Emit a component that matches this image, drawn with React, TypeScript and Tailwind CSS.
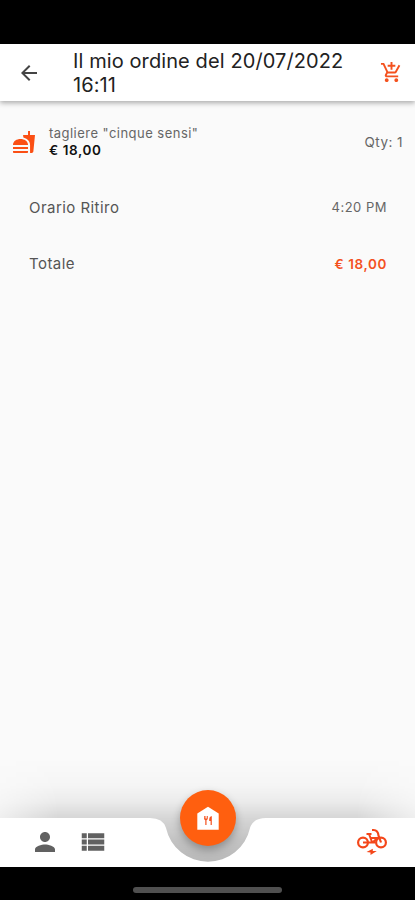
import React from 'react';
import {
  MdAddShoppingCart,
  MdArrowBack,
  MdFastfood,
  MdPerson,
  MdViewList,
} from 'react-icons/md';

const order = {
  title: 'Il mio ordine del 20/07/2022 16:11',
  items: [{ name: 'tagliere "cinque sensi"', price: '€ 18,00', qty: 1 }],
  pickup: '4:20 PM',
  total: '€ 18,00',
};

const BikeIcon = () => (
  <svg viewBox="0 0 30 30" className="size-[30px]" fill="none" stroke="#f4471a" strokeWidth="2">
    <circle cx="6" cy="15.5" r="4.9" strokeWidth="2.2" />
    <circle cx="24" cy="15.5" r="4.9" strokeWidth="2.2" />
    <path d="M9.5 7h5M12 7l3.2 8.5H6M13 11h7.5l-5 4.5h3" />
    <path d="M15 3h1.5q4.5.2 5 5.5L24 15.5" strokeWidth="2.2" />
    <path d="M9.5 25l6.3-3.2v2.2h4l-6.3 4v-2.6z" fill="#f4471a" stroke="none" />
  </svg>
);

const HouseIcon = () => (
  <svg viewBox="0 0 24 24" className="size-6">
    <path d="M12 .7 22.7 7.5v16.3H1.3V7.5z" fill="#fff" />
    <path
      d="M8 10v2.6q0 1.3 1.3 1.7V19h1.2v-4.7q1.3-.4 1.3-1.7V10h-.8v2.4h-.7V10h-.8v2.4h-.7V10zM15.8 10q-2.6.5-2.6 3v2h1.4v4h1.2z"
      fill="#f4511e"
    />
  </svg>
);

const Header = () => (
  <header className="relative z-10 flex h-[57px] items-center bg-white pl-[17px] pr-3 shadow-[0_2px_5px_rgba(0,0,0,0.32)]">
    <MdArrowBack className="size-6 shrink-0 text-[#444]" />
    <h1 className="ml-8 w-[290px] pt-px text-[20px] leading-[24px] tracking-[0.1px] text-[#222]">
      {order.title}
    </h1>
    <MdAddShoppingCart className="ml-auto size-[23px] shrink-0 text-[#f4511e]" />
  </header>
);

const OrderItem = ({ name, price, qty }: { name: string; price: string; qty: number }) => (
  <div className="flex h-[50px] items-center pl-3 pr-3">
    <MdFastfood className="size-6 shrink-0 text-[#fb4f14]" />
    <div className="ml-[13px]">
      <p className="text-[13px] leading-[17px] tracking-[0.47px] text-[#666]">{name}</p>
      <p className="text-[13.5px] font-semibold leading-[17px] tracking-[0.6px] text-[#111]">{price}</p>
    </div>
    <span className="ml-auto text-[13.5px] tracking-[0.45px] text-[#666]">Qty: {qty}</span>
  </div>
);

const BottomBar = () => (
  <div className="relative h-[49px]">
    {/* soft shadow rising above the bar and filling the notch */}
    <div className="absolute inset-x-0 -top-[60px] bottom-0 bg-[linear-gradient(to_bottom,rgba(0,0,0,0)_0%,rgba(0,0,0,0.02)_25%,rgba(0,0,0,0.06)_40%,rgba(0,0,0,0.14)_55%,rgba(0,0,0,0.22)_75%,rgba(0,0,0,0.27)_100%)] [mask-image:linear-gradient(to_right,rgba(0,0,0,0.3),#000_14%,#000_86%,rgba(0,0,0,0.3))]" />
    <div className="relative flex h-full">
      <div className="flex w-[148px] items-center bg-white pb-px pl-[30px]">
        <MdPerson className="size-[30px] text-[#616161]" />
        <MdViewList className="ml-[18px] size-[30px] text-[#616161]" />
      </div>
      {/* bar segment with the notch around the button */}
      <svg width="120" height="49" viewBox="0 0 120 49" className="shrink-0">
        <path d="M0 0H2Q15 0 18 10A43 43 0 0 0 102 10Q105 0 118 0H120V49H0Z" fill="#fff" />
      </svg>
      <div className="flex flex-1 items-center justify-end bg-white pb-px pr-[28px]">
        <BikeIcon />
      </div>
    </div>
    <button className="absolute -top-7 left-[180px] flex size-14 items-center justify-center rounded-full bg-[#ff5f0f] shadow-[0_4px_8px_rgba(0,0,0,0.28)]">
      <HouseIcon />
    </button>
  </div>
);

export default function App() {
  return (
    <div className="flex h-[900px] w-[415px] flex-col overflow-hidden bg-[#fafafa] font-['Inter','Liberation_Sans',sans-serif]">
      <div className="h-11 shrink-0 bg-black" />
      <Header />
      <main className="flex-1 pt-4">
        {order.items.map((item) => (
          <OrderItem key={item.name} {...item} />
        ))}
        <div className="flex h-14 items-center justify-between pl-[29px] pr-7 pt-[26px]">
          <span className="text-[15px] tracking-[0.45px] text-[#555]">Orario Ritiro</span>
          <span className="text-[13px] tracking-[0.5px] text-[#666]">{order.pickup}</span>
        </div>
        <div className="flex h-14 items-center justify-between pl-[29px] pr-7 pt-[26px]">
          <span className="text-[15px] tracking-[0.45px] text-[#555]">Totale</span>
          <span className="text-[13.5px] font-semibold tracking-[0.6px] text-[#f4511e]">{order.total}</span>
        </div>
      </main>
      <BottomBar />
      <div className="relative flex h-[33px] shrink-0 justify-center bg-black pt-5">
        <div className="h-1.5 w-[149px] rounded-full bg-[#505050]" />
      </div>
    </div>
  );
}
